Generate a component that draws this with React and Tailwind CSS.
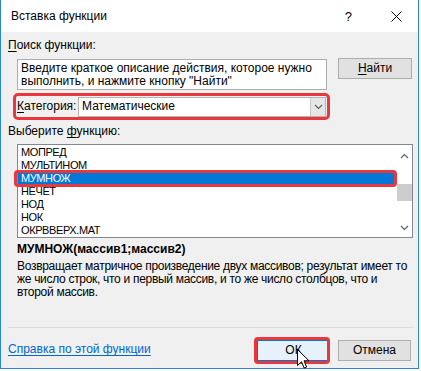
const ITEMS = ['МОПРЕД', 'МУЛЬТИНОМ', 'МУМНОЖ', 'НЕЧЕТ', 'НОД', 'НОК', 'ОКРВВЕРХ.МАТ']

function Chevron({ up, className }) {
  return (
    <svg width="9" height="6" viewBox="0 0 9 6" className={className}>
      <path d={up ? 'M1 5 L4.5 1.5 L8 5' : 'M1 1 L4.5 4.5 L8 1'} fill="none" stroke="#606060" strokeWidth="1.2" />
    </svg>
  )
}

function Cursor() {
  return (
    <svg width="13" height="21" viewBox="0 0 13 21" className="absolute left-[297px] top-[349px]">
      <path d="M0.5 0.5 L0.5 16.5 L4.5 12.8 L7.2 19 L9.6 18 L7 11.8 L12 11.8 Z" fill="#fff" stroke="#000" strokeWidth="1" strokeLinejoin="round" />
    </svg>
  )
}

export default function App() {
  return (
    <div className="relative w-[421px] h-[371px] bg-white overflow-hidden text-[12px] text-black font-['Liberation_Sans',Arial,sans-serif]">
      <div className="w-[419px] h-[369px] border-x border-b border-[#2a86d6] bg-[#f0f0f0] flex flex-col">
        {/* title bar */}
        <div className="h-[32px] bg-white flex items-center shrink-0">
          <span className="ml-[10px] leading-[15px]">Вставка функции</span>
          <span className="ml-auto mr-[39px] text-[13px] leading-[15px]">?</span>
          <svg width="11" height="11" viewBox="0 0 11 11" className="mr-[16px]">
            <path d="M0.5 0.5 L10.5 10.5 M10.5 0.5 L0.5 10.5" stroke="#000" strokeWidth="1" />
          </svg>
        </div>

        <div className="flex flex-col pl-[7px]">
          <div className="mt-[6px] h-[15px] leading-[15px]">
            <span className="underline underline-offset-2">П</span>оиск функции:
          </div>

          {/* search row */}
          <div className="mt-[5px] ml-[9px] flex items-start">
            <div className="mt-[1px] w-[310px] h-[31px] bg-white border border-[#abadb3] pl-[3px] pt-[2px] leading-[13px] whitespace-nowrap overflow-hidden">
              Введите краткое описание действия, которое нужно<br />
              выполнить, и нажмите кнопку "Найти"
            </div>
            <button className="ml-[11px] w-[74px] h-[21px] bg-[#e1e1e1] border border-[#adadad] leading-[15px]">
              <span className="underline underline-offset-2">Н</span>айти
            </button>
          </div>

          {/* category */}
          <div className="mt-[3px] ml-[5px] w-[317px] h-[27px] border-[3px] border-[#e8383d] rounded-[5px] flex items-center pl-[1px]">
            <span className="w-[61px] leading-[15px]">
              <span className="underline underline-offset-2">К</span>атегория:
            </span>
            <div className="w-[248px] h-[20px] bg-white border border-[#b4b4b4] flex items-center">
              <span className="pl-[3px] flex-1 leading-[15px]">Математические</span>
              <div className="w-[15px] h-full bg-[#e6e6e6] border-l border-[#c8c8c8] flex items-center justify-center">
                <Chevron />
              </div>
            </div>
          </div>

          <div className="mt-[4px] h-[15px] leading-[15px]">
            Выберите <span className="underline underline-offset-2">ф</span>ункцию:
          </div>

          {/* list */}
          <div className="mt-[5px] ml-[9px] w-[396px] h-[94px] bg-white border border-[#828790] flex">
            <div className="flex-1 pt-[1px]">
              {ITEMS.map((it, i) =>
                i === 2 ? (
                  <div key={it} className="relative h-[13px] leading-[13px] pl-[3px] bg-[#0078d7] text-white tracking-[-0.4px] text-[11px]">
                    {it}
                    <div className="absolute left-[-4px] top-[-2px] right-[-1px] bottom-[-2px] border-[3px] border-[#e8383d] rounded-[4px]" />
                  </div>
                ) : (
                  <div key={it} className="h-[13px] leading-[13px] pl-[3px] tracking-[-0.4px] text-[11px]">{it}</div>
                )
              )}
            </div>
            <div className="w-[16px] flex flex-col items-center">
              <Chevron up className="mt-[8px]" />
              <div className="mt-[25px] w-[15px] h-[17px] bg-[#cdcdcd]" />
              <Chevron className="mt-[24px]" />
            </div>
          </div>

          <div className="mt-[4px] ml-[9px] h-[14px] leading-[14px] font-bold">МУМНОЖ(массив1;массив2)</div>
          <div className="mt-[4px] ml-[9px] leading-[13px] whitespace-nowrap tracking-[-0.3px]">
            Возвращает матричное произведение двух массивов; результат имеет то<br />
            же число строк, что и первый массив, и то же число столбцов, что и<br />
            второй массив.
          </div>

          <div className="mt-[28px] w-[405px] h-px bg-[#dcdcdc]" />

          <div className="mt-[12px] w-[405px] h-[21px] flex items-center">
            <a className="text-[#0066cc] underline underline-offset-2 leading-[15px] -mt-[2px]">Справка по этой функции</a>
            <div className="ml-auto mr-[2px] flex gap-[8px]">
              <div className="relative">
                <button className="w-[73px] h-[21px] bg-[#e5f1fb] border border-[#0078d7] leading-[15px]">ОК</button>
                <div className="absolute left-[-3px] top-[-3px] w-[76px] h-[27px] border-[3px] border-[#e8383d] rounded-[4px]" />
              </div>
              <button className="w-[73px] h-[21px] bg-[#e1e1e1] border border-[#adadad] leading-[15px]">Отмена</button>
            </div>
          </div>
        </div>
      </div>
      <Cursor />
    </div>
  )
}
